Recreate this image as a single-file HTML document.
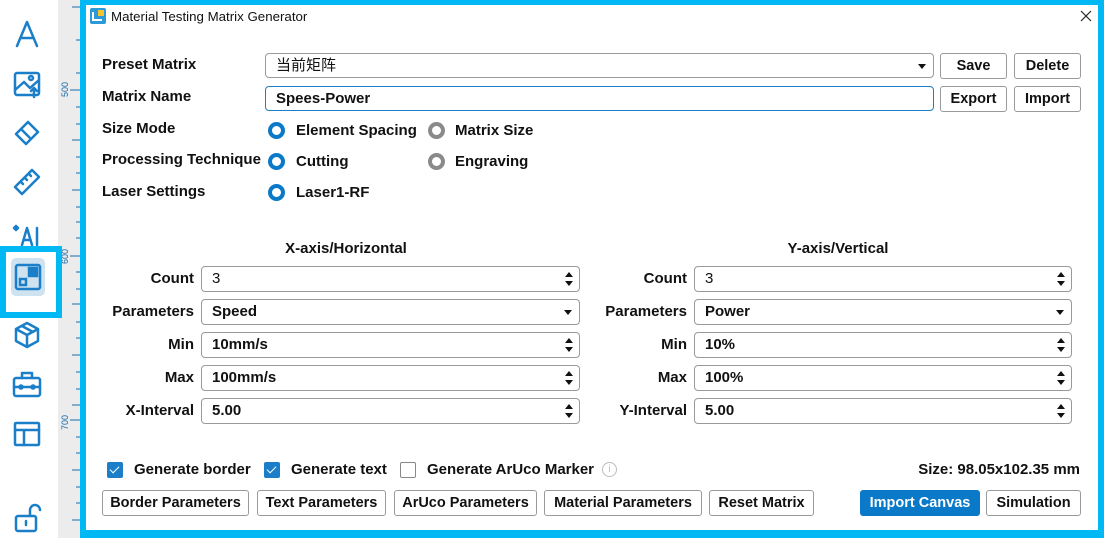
<!DOCTYPE html>
<html><head><meta charset="utf-8"><style>
*{box-sizing:border-box;margin:0;padding:0}
body{width:1104px;height:538px;position:relative;overflow:hidden;background:#fff;font-family:"Liberation Sans","Noto Sans CJK SC",sans-serif;color:#111}
.a{position:absolute}
.l{position:absolute;font-size:15px;font-weight:bold;line-height:18px;white-space:nowrap}
.r{text-align:right}
.box{position:absolute;border:1px solid #9a9a9a;border-radius:4px;background:#fff;font-size:15px;font-weight:bold;line-height:24px;padding-left:10px}
.btn{position:absolute;border:1px solid #9a9a9a;border-radius:3px;background:#fff;font-size:14.5px;font-weight:bold;text-align:center;line-height:24px;height:26px;white-space:nowrap}
.dd::after{content:"";position:absolute;right:7px;top:10px;border-left:4px solid transparent;border-right:4px solid transparent;border-top:5px solid #111}
.sp::before{content:"";position:absolute;right:6px;top:5px;border-left:4px solid transparent;border-right:4px solid transparent;border-bottom:5px solid #111}
.sp::after{content:"";position:absolute;right:6px;bottom:5px;border-left:4px solid transparent;border-right:4px solid transparent;border-top:5px solid #111}
.rad{position:absolute;width:17px;height:17px;border-radius:50%;border:4px solid #0a7ac8;background:#fff}
.rad.g{border-color:#8a8a8a}
.cb{position:absolute;width:16px;height:16px;border-radius:2px;background:#1a7fc8}
.cb::after{content:"";position:absolute;left:5px;top:2px;width:4px;height:8px;border:solid #fff;border-width:0 1.5px 1.5px 0;transform:rotate(45deg)}
</style></head><body>
<!-- sidebar -->
<div class="a" style="left:58px;top:0;width:22px;height:538px;background:#ececec"></div>
<svg class="a" style="left:58px;top:0" width="22" height="538">
<g stroke="#1a6aa8" stroke-width="1">
<line x1="14" y1="7" x2="22" y2="7"/><line x1="18" y1="40" x2="22" y2="40"/><line x1="18" y1="73" x2="22" y2="73"/><line x1="12" y1="90" x2="22" y2="90"/><line x1="18" y1="107" x2="22" y2="107"/><line x1="18" y1="124" x2="22" y2="124"/><line x1="14" y1="140" x2="22" y2="140"/><line x1="18" y1="157" x2="22" y2="157"/><line x1="18" y1="173" x2="22" y2="173"/><line x1="14" y1="190" x2="22" y2="190"/><line x1="18" y1="207" x2="22" y2="207"/><line x1="18" y1="222" x2="22" y2="222"/><line x1="18" y1="238" x2="22" y2="238"/><line x1="12" y1="256" x2="22" y2="256"/><line x1="18" y1="272" x2="22" y2="272"/><line x1="18" y1="289" x2="22" y2="289"/><line x1="14" y1="304" x2="22" y2="304"/><line x1="18" y1="322" x2="22" y2="322"/><line x1="18" y1="338" x2="22" y2="338"/><line x1="14" y1="355" x2="22" y2="355"/><line x1="18" y1="372" x2="22" y2="372"/><line x1="18" y1="389" x2="22" y2="389"/><line x1="14" y1="405" x2="22" y2="405"/><line x1="12" y1="420" x2="22" y2="420"/><line x1="18" y1="437" x2="22" y2="437"/><line x1="18" y1="453" x2="22" y2="453"/><line x1="14" y1="470" x2="22" y2="470"/><line x1="18" y1="487" x2="22" y2="487"/><line x1="18" y1="503" x2="22" y2="503"/><line x1="14" y1="520" x2="22" y2="520"/></g>
<g fill="#1a6aa8" font-size="9" font-family="Liberation Sans"><text transform="translate(10,97) rotate(-90)">500</text><text transform="translate(10,264) rotate(-90)">600</text><text transform="translate(10,430) rotate(-90)">700</text></g></svg>
<svg class="a" style="left:0;top:0" width="58" height="538" fill="none" stroke="#1a7fc8" stroke-width="2.5" stroke-linejoin="round" stroke-linecap="round">
<path d="M17 46 L27 22 L37 46 M20.5 38 H33.5"/>
<rect x="15" y="73" width="24" height="22" rx="2"/><path d="M15 90 L24 82 L30 88 L39 80"/><circle cx="31" cy="78" r="2"/><path d="M34 97 V88 M31 91 L34 88 L37 91"/>
<path d="M16 134 L28 122 L38 132 L26 144 Z M21 129 L31 139"/>
<path d="M15 187 L32 170 L39 177 L22 194 Z M21 182 L23 184 M25 178 L27 180 M29 174 L31 176"/>
<path d="M22 245 L27 228 L32 245 M23.5 240 H30.5 M37 228 V245"/><path d="M14 228 l2-2 2 2-2 2z" fill="#1a7fc8"/>
<path d="M16 329 L27 323 L38 329 V341 L27 347 L16 341 Z M16 329 L27 335 L38 329 M27 335 V347 M22 326 L33 332"/>
<rect x="14" y="378" width="26" height="18" rx="2"/><path d="M22 378 V373 H32 V378 M14 387 H40"/><circle cx="21" cy="387" r="1.5" fill="#1a7fc8"/><circle cx="33" cy="387" r="1.5" fill="#1a7fc8"/>
<rect x="15" y="423" width="24" height="22" rx="1"/><path d="M15 430 H39 M24 430 V445"/>
<rect x="16" y="516" width="20" height="15" rx="2"/><path d="M30 516 V510 A5 5 0 0 1 40 510"/><path d="M26 521 V525"/>
</svg>
<div class="a" style="left:0;top:246px;width:62px;height:72px;border:6px solid #00b8f4"></div>
<div class="a" style="left:11px;top:258px;width:34px;height:38px;background:#cfe2f0;border-radius:5px"></div>
<svg class="a" style="left:11px;top:260px" width="34" height="34" fill="none" stroke="#1a7fc8" stroke-width="2.5"><rect x="5" y="5" width="24" height="24" rx="2"/><rect x="9" y="19" width="6" height="6"/><rect x="18" y="8" width="8" height="8" fill="#1a7fc8"/></svg>
<!-- dialog frame -->
<div class="a" style="left:80px;top:0;width:1024px;height:538px;border:6px solid #00b8f4;border-bottom-width:8px;border-top-width:5px"></div>
<svg class="a" style="left:90px;top:8px" width="16" height="16"><rect x="0" y="0" width="16" height="16" rx="2" fill="#2a9ad8"/><rect x="8" y="2" width="6" height="6" fill="#f4c430"/><path d="M3 4 L3 12 L12 12" stroke="#fff" stroke-width="2" fill="none"/></svg>
<div class="a" style="left:111px;top:9px;font-size:13.3px;line-height:16px">Material Testing Matrix Generator</div>
<svg class="a" style="left:1080px;top:10px" width="12" height="12" stroke="#222" stroke-width="1.2"><path d="M1 1 L11 11 M11 1 L1 11"/></svg>
<!-- top form -->
<div class="l" style="left:102px;top:56px">Preset Matrix</div>
<div class="l" style="left:102px;top:88px">Matrix Name</div>
<div class="l" style="left:102px;top:120px">Size Mode</div>
<div class="l" style="left:102px;top:151px">Processing Technique</div>
<div class="l" style="left:102px;top:183px">Laser Settings</div>
<div class="box dd" style="left:265px;top:53px;width:669px;height:25px;font-weight:normal">当前矩阵</div>
<div class="box" style="left:265px;top:86px;width:669px;height:25px;border-color:#1a7fc8;line-height:23px">Spees-Power</div>
<div class="btn" style="left:940px;top:53px;width:67px">Save</div>
<div class="btn" style="left:1014px;top:53px;width:67px">Delete</div>
<div class="btn" style="left:940px;top:86px;width:67px">Export</div>
<div class="btn" style="left:1014px;top:86px;width:67px">Import</div>
<div class="rad" style="left:268px;top:122px"></div><div class="l" style="left:296px;top:122px">Element Spacing</div>
<div class="rad g" style="left:428px;top:122px"></div><div class="l" style="left:455px;top:122px">Matrix Size</div>
<div class="rad" style="left:268px;top:153px"></div><div class="l" style="left:296px;top:153px">Cutting</div>
<div class="rad g" style="left:428px;top:153px"></div><div class="l" style="left:455px;top:153px">Engraving</div>
<div class="rad" style="left:268px;top:184px"></div><div class="l" style="left:296px;top:184px">Laser1-RF</div>
<!-- axes -->
<div class="l" style="left:246px;top:240px;width:200px;text-align:center">X-axis/Horizontal</div>
<div class="l" style="left:738px;top:240px;width:200px;text-align:center">Y-axis/Vertical</div>
<div class="l r" style="left:84px;top:270px;width:110px">Count</div>
<div class="l r" style="left:84px;top:303px;width:110px">Parameters</div>
<div class="l r" style="left:84px;top:336px;width:110px">Min</div>
<div class="l r" style="left:84px;top:369px;width:110px">Max</div>
<div class="l r" style="left:84px;top:402px;width:110px">X-Interval</div>
<div class="box sp" style="left:201px;top:266px;width:379px;height:26px;font-weight:normal">3</div>
<div class="box dd" style="left:201px;top:299px;width:379px;height:26px">Speed</div>
<div class="box sp" style="left:201px;top:332px;width:379px;height:26px">10mm/s</div>
<div class="box sp" style="left:201px;top:365px;width:379px;height:26px">100mm/s</div>
<div class="box sp" style="left:201px;top:398px;width:379px;height:26px">5.00</div>
<div class="l r" style="left:577px;top:270px;width:110px">Count</div>
<div class="l r" style="left:577px;top:303px;width:110px">Parameters</div>
<div class="l r" style="left:577px;top:336px;width:110px">Min</div>
<div class="l r" style="left:577px;top:369px;width:110px">Max</div>
<div class="l r" style="left:577px;top:402px;width:110px">Y-Interval</div>
<div class="box sp" style="left:694px;top:266px;width:378px;height:26px;font-weight:normal">3</div>
<div class="box dd" style="left:694px;top:299px;width:378px;height:26px">Power</div>
<div class="box sp" style="left:694px;top:332px;width:378px;height:26px">10%</div>
<div class="box sp" style="left:694px;top:365px;width:378px;height:26px">100%</div>
<div class="box sp" style="left:694px;top:398px;width:378px;height:26px">5.00</div>
<!-- checkboxes -->
<div class="cb" style="left:107px;top:462px"></div><div class="l" style="left:134px;top:461px">Generate border</div>
<div class="cb" style="left:264px;top:462px"></div><div class="l" style="left:291px;top:461px">Generate text</div>
<div class="a" style="left:400px;top:462px;width:16px;height:16px;border:1px solid #888;border-radius:2px"></div><div class="l" style="left:427px;top:461px">Generate ArUco Marker</div>
<div class="a" style="left:602px;top:462px;width:15px;height:15px;border:1px solid #bbb;border-radius:50%;font-size:10px;color:#bbb;text-align:center;line-height:13px">i</div>
<div class="l r" style="left:880px;top:461px;width:200px">Size: 98.05x102.35 mm</div>
<div class="btn" style="left:102px;top:490px;width:147px">Border Parameters</div>
<div class="btn" style="left:257px;top:490px;width:129px">Text Parameters</div>
<div class="btn" style="left:394px;top:490px;width:143px">ArUco Parameters</div>
<div class="btn" style="left:544px;top:490px;width:158px">Material Parameters</div>
<div class="btn" style="left:709px;top:490px;width:105px">Reset Matrix</div>
<div class="btn" style="left:860px;top:490px;width:120px;background:#0a7ac8;border-color:#0a7ac8;color:#fff">Import Canvas</div>
<div class="btn" style="left:986px;top:490px;width:95px">Simulation</div>
</body></html>
